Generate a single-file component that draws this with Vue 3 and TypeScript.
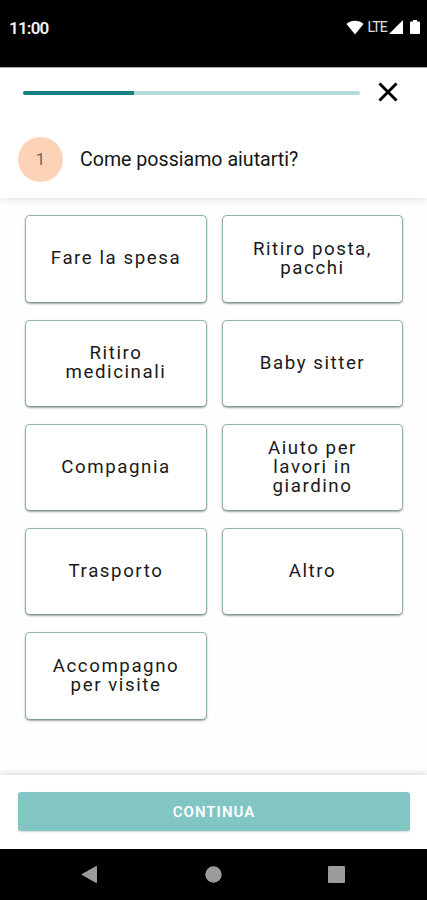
<script setup lang="ts">
import { ref } from 'vue'

interface Service {
  id: string
  label: string
}

const services: Service[] = [
  { id: 'spesa', label: 'Fare la spesa' },
  { id: 'posta', label: 'Ritiro posta,\npacchi' },
  { id: 'medicinali', label: 'Ritiro\nmedicinali' },
  { id: 'baby', label: 'Baby sitter' },
  { id: 'compagnia', label: 'Compagnia' },
  { id: 'giardino', label: 'Aiuto per\nlavori in\ngiardino' },
  { id: 'trasporto', label: 'Trasporto' },
  { id: 'altro', label: 'Altro' },
  { id: 'visite', label: 'Accompagno\nper visite' },
]

const step = ref(1)
const totalSteps = 3
</script>

<template>
  <div class="screen">
    <div class="status">
      <span class="clock">11:00</span>
      <div class="signals">
        <svg class="wifi" width="18" height="15" viewBox="0 0 18 15"><path d="M.5 4C5.2-.3 12.800-.3 17.500 4L9 14.500Z" fill="#fff" /></svg>
        <span class="lte">LTE</span>
        <svg class="cell" width="14" height="14" viewBox="0 0 14 14"><path d="M14 0V14H0Z" fill="#fff" /></svg>
        <svg class="battery" width="10" height="14" viewBox="0 0 10 14"><path d="M3 0H7V1.500H9Q10 1.500 10 2.500V13Q10 14 9 14H1Q0 14 0 13V2.500Q0 1.500 1 1.500H3Z" fill="#fff" /></svg>
      </div>
    </div>

    <header class="header">
      <div class="progress-row">
        <div class="track">
          <div class="fill" :style="{ width: (step / totalSteps) * 100 - 0.4 + '%' }"></div>
        </div>
        <button class="close" aria-label="Chiudi">
          <svg width="20" height="20" viewBox="0 0 20 20"><path d="M1.500 1.500L18.500 18.500M18.500 1.500L1.500 18.500" stroke="#000" stroke-width="2.900" fill="none" /></svg>
        </button>
      </div>
      <div class="question">
        <span class="number">{{ step }}</span>
        <h1 class="title">Come possiamo aiutarti?</h1>
      </div>
    </header>

    <main class="options">
      <button v-for="s in services" :key="s.id" class="card">{{ s.label }}</button>
    </main>

    <footer class="footer">
      <button class="continue">CONTINUA</button>
    </footer>

    <nav class="navbar">
      <svg width="17" height="19" viewBox="0 0 17 19"><path d="M15.500 1.300V17.700L1 9.500Z" fill="#9b9b9b" stroke="#9b9b9b" stroke-linejoin="round" /></svg>
      <svg width="17" height="17" viewBox="0 0 17 17"><circle cx="8.500" cy="8.500" r="8.200" fill="#9b9b9b" /></svg>
      <svg width="17" height="17" viewBox="0 0 17 17"><rect width="17" height="17" rx="1" fill="#9b9b9b" /></svg>
    </nav>
  </div>
</template>

<style>
body {
  margin: 0;
  background: #000;
}
</style>

<style scoped>
.screen {
  width: 427px;
  height: 900px;
  display: flex;
  flex-direction: column;
  overflow: hidden;
  background: #fefefe;
  font-family: Roboto, 'Liberation Sans', sans-serif;
}
button {
  font-family: inherit;
  border: 0;
  padding: 0;
  margin: 0;
}
svg {
  display: block;
}
.status {
  height: 67px;
  flex: none;
  box-sizing: border-box;
  background: #000;
  color: #f2f2f2;
  display: flex;
  justify-content: space-between;
  align-items: flex-start;
  padding: 18px 7px 0 9px;
}
.clock {
  font-size: 17px;
  line-height: 20px;
  font-weight: 600;
  letter-spacing: -0.8px;
}
.signals {
  display: flex;
  align-items: flex-start;
  padding-top: 2px;
}
.lte {
  font-size: 14px;
  line-height: 15px;
  letter-spacing: -0.8px;
  margin-left: 3px;
  color: #e0e0e0;
}
.cell {
  margin: 0 7px 0 2px;
}
.header {
  height: 131px;
  flex: none;
  box-sizing: border-box;
  border-top: 1px solid #aaa;
  background: #fff;
  box-shadow: 0 1px 8px rgba(0, 0, 0, 0.13);
}
.progress-row {
  display: flex;
  align-items: center;
  height: 20px;
  padding: 14px 29px 0 23px;
}
.track {
  width: 337px;
  height: 4px;
  margin-top: 2px;
  border-radius: 2px;
  background: #b2dbd9;
  overflow: hidden;
}
.fill {
  height: 100%;
  background: #18807e;
}
.close {
  margin-left: auto;
  background: none;
}
.question {
  display: flex;
  align-items: center;
  padding: 35px 18px 0;
}
.number {
  width: 45px;
  height: 45px;
  border-radius: 50%;
  background: #fdd3b8;
  color: #796459;
  font-size: 17px;
  line-height: 44px;
  text-align: center;
}
.title {
  margin: 0 0 0 17px;
  font-size: 19.600px;
  line-height: 24px;
  font-weight: 400;
  color: #151515;
}
.options {
  flex: 1;
  display: grid;
  grid-template-columns: 182px 181px;
  grid-auto-rows: 87.300px;
  align-content: start;
  column-gap: 15px;
  row-gap: 17px;
  padding: 17.300px 24px 0 25px;
}
.card {
  box-sizing: border-box;
  border: 1px solid #8fb5ab;
  border-bottom-color: #7f9e96;
  border-radius: 5px;
  background: #fff;
  box-shadow: 0 1px 2px rgba(0, 0, 0, 0.36);
  color: #1a1a1a;
  font-size: 18.700px;
  line-height: 19.300px;
  letter-spacing: 1.560px;
  text-align: center;
  white-space: pre-line;
}
.footer {
  height: 74px;
  flex: none;
  box-sizing: border-box;
  padding: 17px 17px 0 18px;
  background: #fff;
  box-shadow: 0 -1px 7px rgba(0, 0, 0, 0.17);
}
.continue {
  display: block;
  width: 100%;
  height: 39px;
  border-radius: 3px;
  background: #81c6c3;
  box-shadow: 0 1px 2px rgba(0, 0, 0, 0.16);
  color: #fff;
  font-size: 15px;
  font-weight: 600;
  letter-spacing: 1px;
}
.navbar {
  height: 51px;
  flex: none;
  box-sizing: border-box;
  background: #000;
  display: flex;
  justify-content: space-between;
  align-items: center;
  padding: 0 82px 0 81px;
}
</style>
